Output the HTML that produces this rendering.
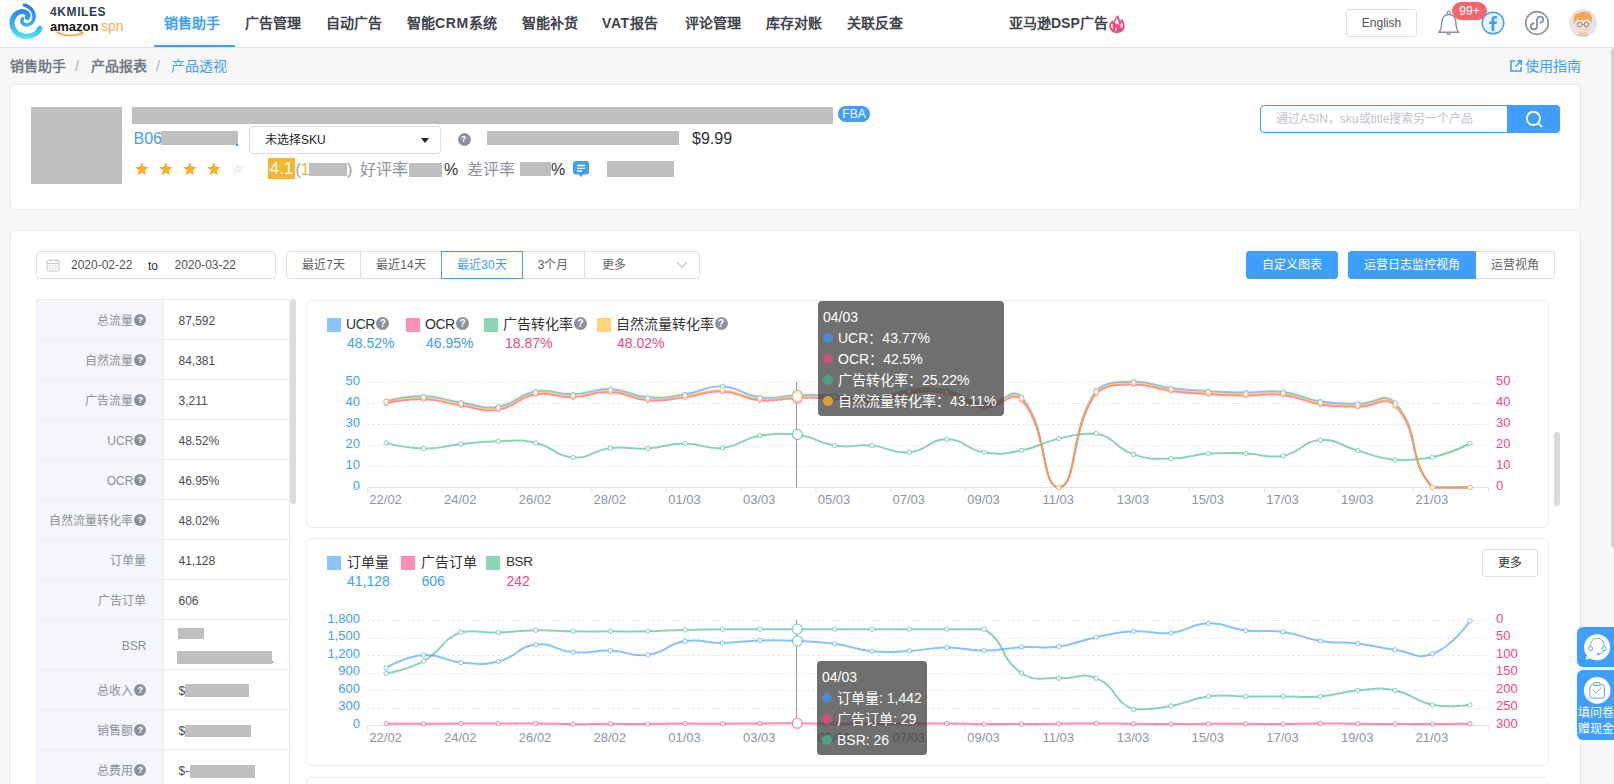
<!DOCTYPE html>
<html lang="zh-CN">
<head>
<meta charset="utf-8">
<title>4KMILES</title>
<style>
*{box-sizing:border-box;margin:0;padding:0}
html,body{width:1614px;height:784px;overflow:hidden;background:#f7f7f8}
body{font-family:"Liberation Sans",sans-serif;font-size:12px;color:#606266;position:relative}
.a{position:absolute;white-space:nowrap}
.c{display:inline-block;width:1em;text-align:center;font-style:normal}
.hdr{left:0;top:0;width:1614px;height:48px;background:#fff;border-bottom:1px solid #dfe3ec}
.nav{top:0;height:47px;line-height:46px;font-size:14px;color:#3f434b;font-weight:500}
.nav .c{font-weight:600}
.nb{font-weight:bold;letter-spacing:0.6px}
.bc{top:56px;height:20px;line-height:20px;font-size:14px;color:#767b86;font-weight:500}
.bcb .c{font-weight:600}
.card{background:#fff;border:1px solid #e3e8f1;border-radius:4px}
.red{background:#bfbfbf}
.btn{height:28px;line-height:27.5px;text-align:center;font-size:12px;border:1px solid #dcdfe6;background:#fff;color:#606266}
.q{display:inline-block;width:12px;height:12px;border-radius:50%;background:#8e919c;vertical-align:-1.5px;margin-left:1px;position:relative}
.q:after{content:"?";position:absolute;left:0;top:0;width:12px;height:12px;line-height:12px;text-align:center;color:#fff;font-size:9px;font-weight:bold;font-style:normal}
.q14{width:13px;height:13px;vertical-align:-1px;margin-left:1px}
.q14:after{width:13px;height:13px;line-height:13px;font-size:10px}
.tr{position:absolute;left:36px;width:254px;border-bottom:1px solid #e8ecf4}
.tl{position:absolute;left:0;top:0;bottom:0;width:128px;background:#f5f6fa;border-left:1px solid #e8ecf4;border-right:1px solid #e8ecf4;text-align:right;padding-right:16.7px;font-size:12px;color:#8c8f98;white-space:nowrap}
.tl .q{margin-right:0}
.tv{position:absolute;left:128px;top:0;bottom:0;width:126px;border-right:1px solid #e8ecf4;padding-left:14.5px;font-size:12px;color:#4a4d55;white-space:nowrap}
.yl{position:absolute;left:300px;width:60px;text-align:right;font-size:13px;line-height:17px;color:#409eff}
.yr{position:absolute;left:1496px;width:60px;text-align:left;font-size:13px;line-height:17px;color:#f5467f}
.xl{position:absolute;width:50px;text-align:center;font-size:13px;line-height:18px;color:#8d93a6}
.lg{position:absolute;font-size:14px;line-height:18px;color:#333;white-space:nowrap}
.lt{letter-spacing:-0.45px}
.sw{position:absolute;width:14px;height:14px}
.lv{position:absolute;font-size:14px;line-height:18px;white-space:nowrap}
.tip{position:absolute;background:rgba(50,50,50,0.7);border-radius:4px;color:#fff;font-size:14px;line-height:21px;padding:5.7px 5px 4.3px 5px;white-space:nowrap}
.tip .d{display:inline-block;width:10px;height:10px;border-radius:50%;margin-right:5px}
</style>
</head>
<body>
<!-- ===== header ===== -->
<div class="a hdr"></div>
<svg class="a" style="left:0;top:0" width="130" height="47" viewBox="0 0 130 47">
  <defs><linearGradient id="lg1" gradientUnits="userSpaceOnUse" x1="0" y1="4" x2="0" y2="38"><stop offset="0" stop-color="#2a78e6"/><stop offset="0.55" stop-color="#36a9f0"/><stop offset="1" stop-color="#4fe6f6"/></linearGradient></defs>
  <path d="M39.8,28.4 C37,35.2 28,38.4 20,35 C12,31.4 9.6,21.4 15,15 C18,11.5 23,10.4 26.4,12.8 C28.4,14.3 28.6,16.4 27.4,17.4" fill="none" stroke="url(#lg1)" stroke-width="5.2" stroke-linecap="round"/>
  <path d="M24.4,5.2 C30.5,6.6 35,12 34,18 C33,23.6 27.4,26.4 23.6,24 C21.6,22.6 21.2,20.2 22.6,18.6" fill="none" stroke="url(#lg1)" stroke-width="3.4" stroke-linecap="round"/>
  <path d="M57.2,32.2 C64,36.6 75,36.4 82.2,32.8" fill="none" stroke="#f79b34" stroke-width="1.5" stroke-linecap="round"/>
  <path d="M79.6,31.6 L82.8,32.2 L81.4,35" fill="none" stroke="#f79b34" stroke-width="1.2" stroke-linecap="round"/>
</svg>
<div class="a" style="left:50px;top:5px;font-size:12px;line-height:14px;font-weight:bold;letter-spacing:0.6px;color:#2f3d52">4KMILES</div>
<div class="a" style="left:50px;top:19px;font-size:13px;line-height:16px;font-weight:bold;color:#111">amazon</div>
<div class="a" style="left:101px;top:18px;font-size:14px;line-height:16px;color:#f9ad55">spn</div>

<div class="a nav" style="left:164px;color:#409eff"><i class="c">销</i><i class="c">售</i><i class="c">助</i><i class="c">手</i></div>
<div class="a" style="left:154px;top:45px;width:81px;height:2px;background:#409eff"></div>
<div class="a nav" style="left:245px"><i class="c">广</i><i class="c">告</i><i class="c">管</i><i class="c">理</i></div>
<div class="a nav" style="left:326px"><i class="c">自</i><i class="c">动</i><i class="c">广</i><i class="c">告</i></div>
<div class="a nav" style="left:407px"><i class="c">智</i><i class="c">能</i><b class="nb">CRM</b><i class="c">系</i><i class="c">统</i></div>
<div class="a nav" style="left:522px"><i class="c">智</i><i class="c">能</i><i class="c">补</i><i class="c">货</i></div>
<div class="a nav" style="left:602px"><b class="nb">VAT</b><i class="c">报</i><i class="c">告</i></div>
<div class="a nav" style="left:685px"><i class="c">评</i><i class="c">论</i><i class="c">管</i><i class="c">理</i></div>
<div class="a nav" style="left:766px"><i class="c">库</i><i class="c">存</i><i class="c">对</i><i class="c">账</i></div>
<div class="a nav" style="left:847px"><i class="c">关</i><i class="c">联</i><i class="c">反</i><i class="c">查</i></div>
<div class="a nav" style="left:1009px"><i class="c">亚</i><i class="c">马</i><i class="c">逊</i><b class="nb" style="letter-spacing:0">DSP</b><i class="c">广</i><i class="c">告</i></div>
<svg class="a" style="left:1108px;top:14px" width="18" height="20" viewBox="0 0 18 20">
  <path d="M10.300,1.200 C10.800,3 11.400,4.800 12,7 C12.800,6.200 13.800,5.400 14.700,4.700 C14.800,6.600 15.600,8 16.300,9.800 C17.400,13 16,16.600 12.800,18.200 C10,19.500 6.400,19.200 4,17.400 C1.200,15.300 0.600,12 1.800,9.400 C2.600,7.800 3.800,7 4.800,6.200 C4.900,7 5.100,7.600 5.500,8.200 C6.200,5.400 7.800,2.800 10.300,1.200 Z" fill="#f8457f"/>
  <path d="M9,4 C7.300,6.200 6.900,8.400 7.700,10.800 C8.400,9.800 9.400,9.600 10.400,10.400 C11.200,11 11.600,11.800 11.600,12.800 C11.200,9.800 10.400,6.800 9,4 Z" fill="#fff"/>
  <path d="M3.300,9.800 C2.300,12 3.200,14.400 5.600,15.400 C4.600,13.600 4.400,11.800 4.900,10 C4.400,10.300 3.800,10.200 3.300,9.800 Z" fill="#fff"/>
  <path d="M13.600,8 C15.400,10.200 15.200,13 13,14.600 C12.200,12.400 12.200,10.200 13.600,8 Z" fill="#fff"/>
  <path d="M8.400,13 C6.800,14.400 6.600,16.400 7.800,17.600 C9,16.600 9.400,14.800 8.400,13 Z" fill="#fff"/>
</svg>

<div class="a btn" style="left:1346px;top:9px;width:71px;border-radius:3px;color:#50535a">English</div>
<!-- bell -->
<svg class="a" style="left:1436px;top:9px" width="26" height="28" viewBox="0 0 26 28">
  <path d="M2.800,23.300 C5.400,21.600 5.500,18 5.700,13.500 C5.900,8.600 8.700,5.500 12.800,5.500 C16.900,5.500 19.700,8.600 19.900,13.500 C20.100,18 20.200,21.600 22.800,23.300 Z" fill="#fff" stroke="#8a93a5" stroke-width="1.500" stroke-linejoin="round"/>
  <circle cx="12.800" cy="3.700" r="1.500" fill="#fff" stroke="#8a93a5" stroke-width="1.200"/>
  <path d="M11,24.300 a1.900,1.700 0 0 0 3.600,0" fill="none" stroke="#8a93a5" stroke-width="1.300"/>
</svg>
<div class="a" style="left:1452px;top:2px;width:35px;height:18px;border-radius:9px;background:#f3666d;color:#fff;font-size:12px;line-height:18px;text-align:center">99+</div>
<!-- fb -->
<svg class="a" style="left:1481px;top:11px" width="24" height="24" viewBox="0 0 24 24">
  <circle cx="12" cy="12" r="10.8" fill="#e8f3ff" stroke="#409eff" stroke-width="1.4"/>
  <path d="M13.2,20 V13 H15.6 L16,10.4 H13.2 V8.8 C13.2,7.9 13.6,7.5 14.5,7.5 H16 V5.3 C15.4,5.2 14.7,5.1 14,5.1 C11.8,5.1 10.5,6.4 10.5,8.6 V10.4 H8.2 V13 H10.5 V20 Z" fill="#409eff"/>
</svg>
<!-- link -->
<svg class="a" style="left:1524px;top:10px" width="26" height="26" viewBox="0 0 26 26">
  <circle cx="13" cy="13" r="11.3" fill="#fff" stroke="#8a93a5" stroke-width="1.7"/>
  <path d="M13,10 C13,7.8 14.6,6.6 16.2,6.6 C18,6.6 19.2,7.9 19.2,9.5 C19.2,11.2 18,12.4 16.4,12.5 M13,10 V16 C13,18.2 11.4,19.4 9.8,19.4 C8,19.4 6.8,18.1 6.8,16.5 C6.8,14.8 8,13.6 9.6,13.5" fill="none" stroke="#8a93a5" stroke-width="1.9" stroke-linecap="round"/>
</svg>
<!-- avatar -->
<svg class="a" style="left:1569px;top:9px" width="28" height="28" viewBox="0 0 28 28">
  <defs><clipPath id="av"><circle cx="14" cy="14" r="14"/></clipPath></defs>
  <circle cx="14" cy="14" r="14" fill="#e5e5e7"/>
  <g clip-path="url(#av)">
    <path d="M10,22 h8 v3 c3,0.6 5,2 6,4 h-20 c1,-2 3,-3.400 6,-4 z" fill="#e9c9b4"/>
    <ellipse cx="14" cy="16" rx="6.6" ry="8" fill="#f3dccb"/>
    <path d="M5.200,15.500 C3,9 6,3.600 11,3.400 C13,1.800 18,2 20.400,4.600 C23.400,6 23.600,11 22,15 C21.600,12.500 20.600,11 19,10 C16,11.400 11,11.400 8.400,10.200 C6.800,11.400 5.800,13 5.200,15.500 Z" fill="#f5a65c"/>
    <circle cx="10.600" cy="15.600" r="2.300" fill="none" stroke="#6f7480" stroke-width="0.8"/>
    <circle cx="17.400" cy="15.600" r="2.300" fill="none" stroke="#6f7480" stroke-width="0.8"/>
    <path d="M12.900,15.400 h2.200" stroke="#6f7480" stroke-width="0.7"/>
  </g>
</svg>
<!-- page scrollbar -->
<div class="a" style="left:1611px;top:48px;width:6px;height:500px;border-radius:3px;background:#d3d3d6"></div>

<!-- ===== breadcrumb ===== -->
<div class="a bc bcb" style="left:10px"><i class="c">销</i><i class="c">售</i><i class="c">助</i><i class="c">手</i></div>
<div class="a bc" style="left:75px;color:#a8abb3;font-weight:normal">/</div>
<div class="a bc bcb" style="left:91px"><i class="c">产</i><i class="c">品</i><i class="c">报</i><i class="c">表</i></div>
<div class="a bc" style="left:156px;color:#a8abb3;font-weight:normal">/</div>
<div class="a bc" style="left:171px;color:#409eff;font-weight:normal"><i class="c">产</i><i class="c">品</i><i class="c">透</i><i class="c">视</i></div>
<svg class="a" style="left:1509px;top:59px" width="14" height="14" viewBox="0 0 14 14"><path d="M6,2 H2 V12 H12 V8" fill="none" stroke="#409eff" stroke-width="1.6"/><path d="M8,1.800 H12.200 V6 M12,2 L6.500,7.500" fill="none" stroke="#409eff" stroke-width="1.6"/></svg>
<div class="a bc" style="left:1524.7px;color:#409eff;font-weight:normal"><i class="c">使</i><i class="c">用</i><i class="c">指</i><i class="c">南</i></div>

<!-- ===== product card ===== -->
<div class="a card" style="left:10px;top:84px;width:1571px;height:126px"></div>
<div class="a red" style="left:31px;top:107px;width:91px;height:77px"></div>
<div class="a red" style="left:132px;top:107px;width:701px;height:17px"></div>
<div class="a" style="left:838px;top:106px;width:32px;height:16px;border-radius:8px;background:#409eff;color:#fff;font-size:12px;line-height:16px;text-align:center">FBA</div>
<div class="a" style="left:133.500px;top:129px;font-size:16px;line-height:20px;color:#409eff">B06</div>
<div class="a red" style="left:161px;top:131px;width:77px;height:14px"></div>
<div class="a" style="left:236px;top:144px;width:2px;height:2px;background:#409eff"></div>
<div class="a" style="left:249px;top:126px;width:192px;height:28px;border:1px solid #dcdfe6;border-radius:4px;background:#fff;font-size:12px;line-height:26px;padding-left:15px;color:#222"><i class="c">未</i><i class="c">选</i><i class="c">择</i>SKU</div>
<div class="a" style="left:421px;top:138px;width:0;height:0;border-left:4px solid transparent;border-right:4px solid transparent;border-top:5px solid #222"></div>
<i class="q a" style="left:457.500px;top:132.500px;width:13px;height:13px;margin:0"></i>
<div class="a red" style="left:487px;top:131px;width:192px;height:14px"></div>
<div class="a" style="left:692px;top:129px;font-size:16px;line-height:20px;color:#303133">$9.99</div>
<svg class="a" style="left:132px;top:160px" width="120" height="18" viewBox="0 0 120 18">
  <defs><path id="st" d="M0,-7 L2.060,-2.160 L7.300,-1.720 L3.320,1.720 L4.520,6.840 L0,4.120 L-4.520,6.840 L-3.320,1.720 L-7.300,-1.720 L-2.060,-2.160 Z"/></defs>
  <use href="#st" transform="translate(9.8 8.8) scale(0.93)" fill="#f7b02c"/><use href="#st" transform="translate(33.800 8.8) scale(0.93)" fill="#f7b02c"/><use href="#st" transform="translate(57.800 8.8) scale(0.93)" fill="#f7b02c"/><use href="#st" transform="translate(81.800 8.8) scale(0.93)" fill="#f7b02c"/><use href="#st" transform="translate(105.8 8.8) scale(0.93)" fill="#eef1f7"/>
</svg>
<div class="a" style="left:268px;top:158px;width:27px;height:21px;background:#f8b62c;color:#fff;font-size:17px;line-height:21px;text-align:center">4.1</div>
<div class="a" style="left:295.500px;top:160px;font-size:16px;line-height:20px;color:#9a9da5">(<span style="color:#f8b62c">1</span></div>
<div class="a red" style="left:309px;top:163px;width:38px;height:12.500px"></div>
<div class="a" style="left:347px;top:160px;font-size:16px;line-height:20px;color:#9a9da5">)</div>
<div class="a" style="left:360px;top:160px;font-size:16px;line-height:20px;color:#8f929b"><i class="c">好</i><i class="c">评</i><i class="c">率</i></div>
<div class="a red" style="left:409px;top:162.500px;width:33px;height:14px"></div>
<div class="a" style="left:444px;top:160px;font-size:16px;line-height:20px;color:#303133">%</div>
<div class="a" style="left:466.500px;top:160px;font-size:16px;line-height:20px;color:#8f929b"><i class="c">差</i><i class="c">评</i><i class="c">率</i></div>
<div class="a red" style="left:520px;top:162px;width:31px;height:13.500px"></div>
<div class="a" style="left:551px;top:160px;font-size:16px;line-height:20px;color:#303133">%</div>
<svg class="a" style="left:573px;top:161px" width="16" height="17" viewBox="0 0 16 17"><path d="M3,0 H13 a3,3 0 0 1 3,3 V10.500 a3,3 0 0 1 -3,3 H10 L8,16.200 L6,13.500 H3 a3,3 0 0 1 -3,-3 V3 a3,3 0 0 1 3,-3 Z" fill="#409eff"/><path d="M4,4.500 H12 M4,7.300 H12 M4,10 H9" stroke="#fff" stroke-width="1.300"/></svg>
<div class="a red" style="left:607px;top:161px;width:67px;height:15.500px"></div>
<!-- search -->
<div class="a" style="left:1260px;top:105px;width:248px;height:28px;border:1px solid #409eff;border-radius:4px 0 0 4px;background:#fff;font-size:12px;line-height:26px;padding-left:15px;color:#c0c4cc"><i class="c">通</i><i class="c">过</i>ASIN<i class="c">，</i>sku<i class="c">或</i>title<i class="c">搜</i><i class="c">索</i><i class="c">另</i><i class="c">一</i><i class="c">个</i><i class="c">产</i><i class="c">品</i></div>
<div class="a" style="left:1507px;top:105px;width:53px;height:28px;border-radius:0 4px 4px 0;background:#409eff"></div>
<svg class="a" style="left:1524px;top:109px" width="20" height="20" viewBox="0 0 20 20"><circle cx="9.400" cy="9.400" r="6.600" fill="none" stroke="#fff" stroke-width="1.900"/><path d="M14.200,14.400 L17.400,17.400" stroke="#fff" stroke-width="1.900" stroke-linecap="round"/></svg>

<!-- ===== main card ===== -->
<div class="a card" style="left:10px;top:230px;width:1571px;height:600px"></div>
<div class="a" style="left:36px;top:251px;width:240px;height:28px;border:1px solid #dcdfe6;border-radius:4px;background:#fff"></div>
<svg class="a" style="left:46px;top:258px" width="14" height="14" viewBox="0 0 14 14"><rect x="1" y="2.3" width="12" height="10.700" rx="0.800" fill="none" stroke="#c0c4cc" stroke-width="1"/><path d="M1,5.300 H13 M4,0.800 V3 M10,0.800 V3" stroke="#c0c4cc" stroke-width="1"/><path d="M3.400,7.800 H11 M3.400,10.300 H11" stroke="#c0c4cc" stroke-width="1.100" stroke-dasharray="1.800 1"/></svg>
<div class="a" style="left:71px;top:256px;font-size:12px;line-height:18px;color:#50535a">2020-02-22</div>
<div class="a" style="left:148px;top:257px;font-size:12px;line-height:18px;color:#303133">to</div>
<div class="a" style="left:174.500px;top:256px;font-size:12px;line-height:18px;color:#50535a">2020-03-22</div>

<div class="a btn" style="left:286px;top:251px;width:75px;border-radius:4px 0 0 4px"><i class="c">最</i><i class="c">近</i>7<i class="c">天</i></div>
<div class="a btn" style="left:360px;top:251px;width:82px"><i class="c">最</i><i class="c">近</i>14<i class="c">天</i></div>
<div class="a btn" style="left:522px;top:251px;width:63px;border-left:0">3<i class="c">个</i><i class="c">月</i></div>
<div class="a btn" style="left:584px;top:251px;width:116px;border-radius:0 4px 4px 0;text-align:left;padding-left:17px"><i class="c">更</i><i class="c">多</i></div>
<div class="a btn" style="left:441px;top:251px;width:82px;border-color:#409eff;color:#409eff"><i class="c">最</i><i class="c">近</i>30<i class="c">天</i></div>
<svg class="a" style="left:676px;top:261px" width="12" height="8" viewBox="0 0 12 8"><path d="M1,1.200 L6,6.200 L11,1.200" fill="none" stroke="#c0c4cc" stroke-width="1.100"/></svg>

<div class="a btn" style="left:1246px;top:251px;width:92px;border-radius:3px;background:#409eff;border-color:#409eff;color:#fff"><i class="c">自</i><i class="c">定</i><i class="c">义</i><i class="c">图</i><i class="c">表</i></div>
<div class="a btn" style="left:1348px;top:251px;width:128px;border-radius:3px 0 0 3px;background:#409eff;border-color:#409eff;color:#fff"><i class="c">运</i><i class="c">营</i><i class="c">日</i><i class="c">志</i><i class="c">监</i><i class="c">控</i><i class="c">视</i><i class="c">角</i></div>
<div class="a btn" style="left:1476px;top:251px;width:79px;border-radius:0 3px 3px 0;border-left:0"><i class="c">运</i><i class="c">营</i><i class="c">视</i><i class="c">角</i></div>

<!-- table -->
<div class="a" style="left:36px;top:299px;width:254px;height:1px;background:#e8ecf4"></div>
<div class="tr" style="top:299.5px;height:40px"><div class="tl" style="line-height:42px"><i class="c">总</i><i class="c">流</i><i class="c">量</i><i class="q"></i></div><div class="tv" style="line-height:42px">87,592</div></div><div class="tr" style="top:339.5px;height:40px"><div class="tl" style="line-height:42px"><i class="c">自</i><i class="c">然</i><i class="c">流</i><i class="c">量</i><i class="q"></i></div><div class="tv" style="line-height:42px">84,381</div></div><div class="tr" style="top:379.5px;height:40px"><div class="tl" style="line-height:42px"><i class="c">广</i><i class="c">告</i><i class="c">流</i><i class="c">量</i><i class="q"></i></div><div class="tv" style="line-height:42px">3,211</div></div><div class="tr" style="top:419.5px;height:40px"><div class="tl" style="line-height:42px">UCR<i class="q"></i></div><div class="tv" style="line-height:42px">48.52%</div></div><div class="tr" style="top:459.5px;height:40px"><div class="tl" style="line-height:42px">OCR<i class="q"></i></div><div class="tv" style="line-height:42px">46.95%</div></div><div class="tr" style="top:499.5px;height:40px"><div class="tl" style="line-height:42px"><i class="c">自</i><i class="c">然</i><i class="c">流</i><i class="c">量</i><i class="c">转</i><i class="c">化</i><i class="c">率</i><i class="q"></i></div><div class="tv" style="line-height:42px">48.02%</div></div><div class="tr" style="top:539.5px;height:40px"><div class="tl" style="line-height:42px"><i class="c">订</i><i class="c">单</i><i class="c">量</i></div><div class="tv" style="line-height:42px">41,128</div></div><div class="tr" style="top:579.5px;height:40px"><div class="tl" style="line-height:42px"><i class="c">广</i><i class="c">告</i><i class="c">订</i><i class="c">单</i></div><div class="tv" style="line-height:42px">606</div></div><div class="tr" style="top:619.5px;height:50px"><div class="tl" style="line-height:52px">BSR</div><div class="tv" style="line-height:52px"></div></div><div class="tr" style="top:669.5px;height:40px"><div class="tl" style="line-height:42px"><i class="c">总</i><i class="c">收</i><i class="c">入</i><i class="q"></i></div><div class="tv" style="line-height:42px">$</div></div><div class="tr" style="top:709.5px;height:40px"><div class="tl" style="line-height:42px"><i class="c">销</i><i class="c">售</i><i class="c">额</i><i class="q"></i></div><div class="tv" style="line-height:42px">$</div></div><div class="tr" style="top:749.5px;height:40px"><div class="tl" style="line-height:42px"><i class="c">总</i><i class="c">费</i><i class="c">用</i><i class="q"></i></div><div class="tv" style="line-height:42px">$-</div></div>
<div class="a red" style="left:178px;top:628px;width:26px;height:10.500px"></div>
<div class="a red" style="left:177px;top:650.500px;width:95px;height:13.500px"></div>
<div class="a" style="left:272px;top:661px;width:1px;height:2px;background:#409eff"></div>
<div class="a red" style="left:185px;top:684px;width:64px;height:12.500px"></div>
<div class="a red" style="left:185px;top:724.500px;width:66px;height:12.500px"></div>
<div class="a red" style="left:190px;top:765px;width:65px;height:12.500px"></div>
<div class="a" style="left:290px;top:299px;width:6px;height:204.5px;border-radius:3px;background:#dcdcdf"></div>

<!-- chart cards -->
<div class="a" style="left:306px;top:300px;width:1243px;height:228px;border:1px solid #e6ebf5;border-radius:6px;background:#fff"></div>
<div class="a" style="left:306px;top:538px;width:1243px;height:228px;border:1px solid #e6ebf5;border-radius:6px;background:#fff"></div>
<div class="a" style="left:306px;top:776.500px;width:1243px;height:40px;border:1px solid #e6ebf5;border-radius:6px;background:#fff"></div>
<div class="a" style="left:1554px;top:432px;width:6px;height:74px;border-radius:3px;background:#d9d9db"></div>

<!-- legends chart 1 -->
<div class="sw" style="left:327px;top:317.500px;background:#8cc4ff"></div><div class="lg lt" style="left:346px;top:315px">UCR<i class="q q14"></i></div>
<div class="sw" style="left:406px;top:317.500px;background:#fb8fb2"></div><div class="lg lt" style="left:425px;top:315px">OCR<i class="q q14"></i></div>
<div class="sw" style="left:484px;top:317.500px;background:#8ed5b5"></div><div class="lg" style="left:503px;top:315px"><i class="c">广</i><i class="c">告</i><i class="c">转</i><i class="c">化</i><i class="c">率</i><i class="q q14"></i></div>
<div class="sw" style="left:596.700px;top:317.500px;background:#fdd580"></div><div class="lg" style="left:615.500px;top:315px"><i class="c">自</i><i class="c">然</i><i class="c">流</i><i class="c">量</i><i class="c">转</i><i class="c">化</i><i class="c">率</i><i class="q q14"></i></div>
<div class="lv" style="left:347px;top:333.500px;color:#409eff">48.52%</div>
<div class="lv" style="left:426px;top:333.500px;color:#409eff">46.95%</div>
<div class="lv" style="left:505px;top:333.500px;color:#f5467f">18.87%</div>
<div class="lv" style="left:617px;top:333.500px;color:#f5467f">48.02%</div>
<!-- legends chart 2 -->
<div class="sw" style="left:327px;top:555.500px;background:#8cc4ff"></div><div class="lg" style="left:346.500px;top:553px"><i class="c">订</i><i class="c">单</i><i class="c">量</i></div>
<div class="sw" style="left:401px;top:555.500px;background:#fb8fb2"></div><div class="lg" style="left:420.500px;top:553px"><i class="c">广</i><i class="c">告</i><i class="c">订</i><i class="c">单</i></div>
<div class="sw" style="left:486px;top:555.500px;background:#8ed5b5"></div><div class="lg lt" style="left:506px;top:553px;font-size:13.6px">BSR</div>
<div class="lv" style="left:347px;top:572px;color:#409eff">41,128</div>
<div class="lv" style="left:421.500px;top:572px;color:#409eff">606</div>
<div class="lv" style="left:506.500px;top:572px;color:#f5467f">242</div>
<div class="a btn" style="left:1482px;top:549px;width:56px;height:28px;border-radius:3px;color:#303133"><i class="c">更</i><i class="c">多</i></div>

<div class="yl" style="top:477.2px">0</div><div class="yr" style="top:477.2px">0</div><div class="yl" style="top:456.1px">10</div><div class="yr" style="top:456.1px">10</div><div class="yl" style="top:435.1px">20</div><div class="yr" style="top:435.1px">20</div><div class="yl" style="top:414.0px">30</div><div class="yr" style="top:414.0px">30</div><div class="yl" style="top:393.0px">40</div><div class="yr" style="top:393.0px">40</div><div class="yl" style="top:371.9px">50</div><div class="yr" style="top:371.9px">50</div><div class="yl" style="top:714.7px">0</div><div class="yl" style="top:697.2px">300</div><div class="yl" style="top:679.7px">600</div><div class="yl" style="top:662.2px">900</div><div class="yl" style="top:644.8px">1,200</div><div class="yl" style="top:627.3px">1,500</div><div class="yl" style="top:609.8px">1,800</div><div class="yr" style="top:609.8px">0</div><div class="yr" style="top:627.3px">50</div><div class="yr" style="top:644.8px">100</div><div class="yr" style="top:662.3px">150</div><div class="yr" style="top:679.8px">200</div><div class="yr" style="top:697.3px">250</div><div class="yr" style="top:714.8px">300</div><div class="xl" style="left:360.6px;top:491px">22/02</div><div class="xl" style="left:360.6px;top:729px">22/02</div><div class="xl" style="left:435.3px;top:491px">24/02</div><div class="xl" style="left:435.3px;top:729px">24/02</div><div class="xl" style="left:510.1px;top:491px">26/02</div><div class="xl" style="left:510.1px;top:729px">26/02</div><div class="xl" style="left:584.8px;top:491px">28/02</div><div class="xl" style="left:584.8px;top:729px">28/02</div><div class="xl" style="left:659.5px;top:491px">01/03</div><div class="xl" style="left:659.5px;top:729px">01/03</div><div class="xl" style="left:734.3px;top:491px">03/03</div><div class="xl" style="left:734.3px;top:729px">03/03</div><div class="xl" style="left:809.0px;top:491px">05/03</div><div class="xl" style="left:809.0px;top:729px">05/03</div><div class="xl" style="left:883.8px;top:491px">07/03</div><div class="xl" style="left:883.8px;top:729px">07/03</div><div class="xl" style="left:958.5px;top:491px">09/03</div><div class="xl" style="left:958.5px;top:729px">09/03</div><div class="xl" style="left:1033.2px;top:491px">11/03</div><div class="xl" style="left:1033.2px;top:729px">11/03</div><div class="xl" style="left:1108.0px;top:491px">13/03</div><div class="xl" style="left:1108.0px;top:729px">13/03</div><div class="xl" style="left:1182.7px;top:491px">15/03</div><div class="xl" style="left:1182.7px;top:729px">15/03</div><div class="xl" style="left:1257.5px;top:491px">17/03</div><div class="xl" style="left:1257.5px;top:729px">17/03</div><div class="xl" style="left:1332.2px;top:491px">19/03</div><div class="xl" style="left:1332.2px;top:729px">19/03</div><div class="xl" style="left:1406.9px;top:491px">21/03</div><div class="xl" style="left:1406.9px;top:729px">21/03</div>
<svg class="a" style="left:0;top:0;pointer-events:none" width="1614" height="784" viewBox="0 0 1614 784">
<line x1="367.5" x2="1488.5" y1="466.5" y2="466.5" stroke="#e0e6f1" stroke-width="1" stroke-dasharray="2,3"/><line x1="367.5" x2="1488.5" y1="445.5" y2="445.5" stroke="#e0e6f1" stroke-width="1" stroke-dasharray="2,3"/><line x1="367.5" x2="1488.5" y1="424.5" y2="424.5" stroke="#e0e6f1" stroke-width="1" stroke-dasharray="2,3"/><line x1="367.5" x2="1488.5" y1="403.5" y2="403.5" stroke="#e0e6f1" stroke-width="1" stroke-dasharray="2,3"/><line x1="367.5" x2="1488.5" y1="382.5" y2="382.5" stroke="#e0e6f1" stroke-width="1" stroke-dasharray="2,3"/><line x1="367.5" x2="1488.5" y1="487.5" y2="487.5" stroke="#dfe4ee" stroke-width="1"/><line x1="367.5" x2="367.5" y1="487.5" y2="492.5" stroke="#dfe4ee" stroke-width="1"/><line x1="442.2" x2="442.2" y1="487.5" y2="492.5" stroke="#dfe4ee" stroke-width="1"/><line x1="517.0" x2="517.0" y1="487.5" y2="492.5" stroke="#dfe4ee" stroke-width="1"/><line x1="591.7" x2="591.7" y1="487.5" y2="492.5" stroke="#dfe4ee" stroke-width="1"/><line x1="666.5" x2="666.5" y1="487.5" y2="492.5" stroke="#dfe4ee" stroke-width="1"/><line x1="741.2" x2="741.2" y1="487.5" y2="492.5" stroke="#dfe4ee" stroke-width="1"/><line x1="815.9" x2="815.9" y1="487.5" y2="492.5" stroke="#dfe4ee" stroke-width="1"/><line x1="890.7" x2="890.7" y1="487.5" y2="492.5" stroke="#dfe4ee" stroke-width="1"/><line x1="965.4" x2="965.4" y1="487.5" y2="492.5" stroke="#dfe4ee" stroke-width="1"/><line x1="1040.2" x2="1040.2" y1="487.5" y2="492.5" stroke="#dfe4ee" stroke-width="1"/><line x1="1114.9" x2="1114.9" y1="487.5" y2="492.5" stroke="#dfe4ee" stroke-width="1"/><line x1="1189.6" x2="1189.6" y1="487.5" y2="492.5" stroke="#dfe4ee" stroke-width="1"/><line x1="1264.4" x2="1264.4" y1="487.5" y2="492.5" stroke="#dfe4ee" stroke-width="1"/><line x1="1339.1" x2="1339.1" y1="487.5" y2="492.5" stroke="#dfe4ee" stroke-width="1"/><line x1="1413.9" x2="1413.9" y1="487.5" y2="492.5" stroke="#dfe4ee" stroke-width="1"/><line x1="1488.6" x2="1488.6" y1="487.5" y2="492.5" stroke="#dfe4ee" stroke-width="1"/><line x1="796.5" x2="796.5" y1="382" y2="487.5" stroke="#999" stroke-width="1"/><path d="M386.2,401.2C386.2,401.2 404.9,395.9 423.6,396.2C442.3,396.5 442.2,399.9 460.9,402.5C479.5,405.1 480.3,409.4 498.3,406.7C517.7,403.8 516.3,394.6 535.7,391.4C553.6,388.4 554.4,394.9 573.0,394.3C591.8,393.7 591.8,388.3 610.4,389.0C629.2,389.8 628.9,395.9 647.8,397.3C666.3,398.6 666.6,397.0 685.1,394.3C704.0,391.6 704.0,385.7 722.5,386.4C741.4,387.2 740.8,395.0 759.9,397.3C778.2,399.4 778.6,395.8 797.3,395.3C815.9,394.8 816.0,394.5 834.6,395.4C853.4,396.3 853.5,400.2 872.0,398.9C890.9,397.6 890.4,392.2 909.4,390.1C927.8,388.0 928.6,387.1 946.7,390.5C966.0,394.2 965.0,402.5 984.1,404.2C1002.4,405.8 1011.0,385.4 1021.5,397.0C1048.4,427.0 1040.7,487.5 1058.8,487.5C1078.1,485.8 1068.9,429.2 1096.2,390.5C1106.3,381.5 1114.8,382.1 1133.6,381.5C1152.1,381.5 1152.2,385.6 1171.0,388.0C1189.5,390.4 1189.6,390.0 1208.3,391.2C1227.0,392.3 1227.0,392.4 1245.7,392.6C1264.4,392.8 1264.7,389.8 1283.1,392.0C1302.0,394.2 1301.5,398.5 1320.4,401.5C1338.8,404.4 1339.1,403.4 1357.8,403.8C1376.5,404.2 1384.4,390.9 1395.2,402.9C1421.8,432.7 1405.9,457.4 1432.5,487.5C1443.3,487.5 1469.9,487.5 1469.9,487.5" fill="none" stroke="#409eff" stroke-opacity="0.62" stroke-width="2" stroke-linejoin="round"/><circle cx="386.2" cy="401.2" r="2.2" fill="#fff" stroke="#409eff" stroke-opacity="0.62" stroke-width="1"/><circle cx="423.6" cy="396.2" r="2.2" fill="#fff" stroke="#409eff" stroke-opacity="0.62" stroke-width="1"/><circle cx="460.9" cy="402.5" r="2.2" fill="#fff" stroke="#409eff" stroke-opacity="0.62" stroke-width="1"/><circle cx="498.3" cy="406.7" r="2.2" fill="#fff" stroke="#409eff" stroke-opacity="0.62" stroke-width="1"/><circle cx="535.7" cy="391.4" r="2.2" fill="#fff" stroke="#409eff" stroke-opacity="0.62" stroke-width="1"/><circle cx="573.0" cy="394.3" r="2.2" fill="#fff" stroke="#409eff" stroke-opacity="0.62" stroke-width="1"/><circle cx="610.4" cy="389.0" r="2.2" fill="#fff" stroke="#409eff" stroke-opacity="0.62" stroke-width="1"/><circle cx="647.8" cy="397.3" r="2.2" fill="#fff" stroke="#409eff" stroke-opacity="0.62" stroke-width="1"/><circle cx="685.1" cy="394.3" r="2.2" fill="#fff" stroke="#409eff" stroke-opacity="0.62" stroke-width="1"/><circle cx="722.5" cy="386.4" r="2.2" fill="#fff" stroke="#409eff" stroke-opacity="0.62" stroke-width="1"/><circle cx="759.9" cy="397.3" r="2.2" fill="#fff" stroke="#409eff" stroke-opacity="0.62" stroke-width="1"/><circle cx="834.6" cy="395.4" r="2.2" fill="#fff" stroke="#409eff" stroke-opacity="0.62" stroke-width="1"/><circle cx="872.0" cy="398.9" r="2.2" fill="#fff" stroke="#409eff" stroke-opacity="0.62" stroke-width="1"/><circle cx="909.4" cy="390.1" r="2.2" fill="#fff" stroke="#409eff" stroke-opacity="0.62" stroke-width="1"/><circle cx="946.7" cy="390.5" r="2.2" fill="#fff" stroke="#409eff" stroke-opacity="0.62" stroke-width="1"/><circle cx="984.1" cy="404.2" r="2.2" fill="#fff" stroke="#409eff" stroke-opacity="0.62" stroke-width="1"/><circle cx="1021.5" cy="397.0" r="2.2" fill="#fff" stroke="#409eff" stroke-opacity="0.62" stroke-width="1"/><circle cx="1058.8" cy="487.5" r="2.2" fill="#fff" stroke="#409eff" stroke-opacity="0.62" stroke-width="1"/><circle cx="1096.2" cy="390.5" r="2.2" fill="#fff" stroke="#409eff" stroke-opacity="0.62" stroke-width="1"/><circle cx="1133.6" cy="381.5" r="2.2" fill="#fff" stroke="#409eff" stroke-opacity="0.62" stroke-width="1"/><circle cx="1171.0" cy="388.0" r="2.2" fill="#fff" stroke="#409eff" stroke-opacity="0.62" stroke-width="1"/><circle cx="1208.3" cy="391.2" r="2.2" fill="#fff" stroke="#409eff" stroke-opacity="0.62" stroke-width="1"/><circle cx="1245.7" cy="392.6" r="2.2" fill="#fff" stroke="#409eff" stroke-opacity="0.62" stroke-width="1"/><circle cx="1283.1" cy="392.0" r="2.2" fill="#fff" stroke="#409eff" stroke-opacity="0.62" stroke-width="1"/><circle cx="1320.4" cy="401.5" r="2.2" fill="#fff" stroke="#409eff" stroke-opacity="0.62" stroke-width="1"/><circle cx="1357.8" cy="403.8" r="2.2" fill="#fff" stroke="#409eff" stroke-opacity="0.62" stroke-width="1"/><circle cx="1395.2" cy="402.9" r="2.2" fill="#fff" stroke="#409eff" stroke-opacity="0.62" stroke-width="1"/><circle cx="1432.5" cy="487.5" r="2.2" fill="#fff" stroke="#409eff" stroke-opacity="0.62" stroke-width="1"/><circle cx="1469.9" cy="487.5" r="2.2" fill="#fff" stroke="#409eff" stroke-opacity="0.62" stroke-width="1"/><path d="M386.2,403.3C386.2,403.3 404.9,398.6 423.6,399.2C442.3,399.7 442.2,402.8 460.9,405.5C479.5,408.1 480.3,412.4 498.3,409.7C517.7,406.8 516.3,397.5 535.7,394.3C553.6,391.3 554.4,397.8 573.0,397.3C591.8,396.7 591.8,391.3 610.4,392.0C629.2,392.7 628.9,398.9 647.8,400.2C666.3,401.5 666.5,399.4 685.1,397.3C703.9,395.1 704.0,390.8 722.5,391.6C741.3,392.3 741.0,398.6 759.9,400.2C778.3,401.8 778.6,398.5 797.3,398.0C815.9,397.5 816.0,397.3 834.6,398.3C853.4,399.3 853.5,403.2 872.0,401.9C890.9,400.6 890.4,395.2 909.4,393.0C927.8,391.0 928.6,390.1 946.7,393.5C966.0,397.1 965.0,405.5 984.1,407.2C1002.4,408.8 1010.8,388.5 1021.5,400.0C1048.2,428.7 1040.7,487.5 1058.8,487.5C1078.1,485.8 1069.1,430.8 1096.2,393.5C1106.5,384.4 1114.8,385.0 1133.6,384.4C1152.1,384.4 1152.2,388.5 1171.0,390.9C1189.5,393.3 1189.6,392.9 1208.3,394.1C1227.0,395.3 1227.0,395.4 1245.7,395.6C1264.4,395.8 1264.7,392.8 1283.1,394.9C1302.0,397.2 1301.5,401.4 1320.4,404.4C1338.8,407.3 1339.1,406.4 1357.8,406.7C1376.5,407.1 1384.2,394.0 1395.2,405.9C1421.6,434.4 1406.2,458.7 1432.5,487.5C1443.5,487.5 1469.9,487.5 1469.9,487.5" fill="none" stroke="#f8457f" stroke-opacity="0.62" stroke-width="2" stroke-linejoin="round"/><circle cx="386.2" cy="403.3" r="2.2" fill="#fff" stroke="#f8457f" stroke-opacity="0.62" stroke-width="1"/><circle cx="423.6" cy="399.2" r="2.2" fill="#fff" stroke="#f8457f" stroke-opacity="0.62" stroke-width="1"/><circle cx="460.9" cy="405.5" r="2.2" fill="#fff" stroke="#f8457f" stroke-opacity="0.62" stroke-width="1"/><circle cx="498.3" cy="409.7" r="2.2" fill="#fff" stroke="#f8457f" stroke-opacity="0.62" stroke-width="1"/><circle cx="535.7" cy="394.3" r="2.2" fill="#fff" stroke="#f8457f" stroke-opacity="0.62" stroke-width="1"/><circle cx="573.0" cy="397.3" r="2.2" fill="#fff" stroke="#f8457f" stroke-opacity="0.62" stroke-width="1"/><circle cx="610.4" cy="392.0" r="2.2" fill="#fff" stroke="#f8457f" stroke-opacity="0.62" stroke-width="1"/><circle cx="647.8" cy="400.2" r="2.2" fill="#fff" stroke="#f8457f" stroke-opacity="0.62" stroke-width="1"/><circle cx="685.1" cy="397.3" r="2.2" fill="#fff" stroke="#f8457f" stroke-opacity="0.62" stroke-width="1"/><circle cx="722.5" cy="391.6" r="2.2" fill="#fff" stroke="#f8457f" stroke-opacity="0.62" stroke-width="1"/><circle cx="759.9" cy="400.2" r="2.2" fill="#fff" stroke="#f8457f" stroke-opacity="0.62" stroke-width="1"/><circle cx="834.6" cy="398.3" r="2.2" fill="#fff" stroke="#f8457f" stroke-opacity="0.62" stroke-width="1"/><circle cx="872.0" cy="401.9" r="2.2" fill="#fff" stroke="#f8457f" stroke-opacity="0.62" stroke-width="1"/><circle cx="909.4" cy="393.0" r="2.2" fill="#fff" stroke="#f8457f" stroke-opacity="0.62" stroke-width="1"/><circle cx="946.7" cy="393.5" r="2.2" fill="#fff" stroke="#f8457f" stroke-opacity="0.62" stroke-width="1"/><circle cx="984.1" cy="407.2" r="2.2" fill="#fff" stroke="#f8457f" stroke-opacity="0.62" stroke-width="1"/><circle cx="1021.5" cy="400.0" r="2.2" fill="#fff" stroke="#f8457f" stroke-opacity="0.62" stroke-width="1"/><circle cx="1058.8" cy="487.5" r="2.2" fill="#fff" stroke="#f8457f" stroke-opacity="0.62" stroke-width="1"/><circle cx="1096.2" cy="393.5" r="2.2" fill="#fff" stroke="#f8457f" stroke-opacity="0.62" stroke-width="1"/><circle cx="1133.6" cy="384.4" r="2.2" fill="#fff" stroke="#f8457f" stroke-opacity="0.62" stroke-width="1"/><circle cx="1171.0" cy="390.9" r="2.2" fill="#fff" stroke="#f8457f" stroke-opacity="0.62" stroke-width="1"/><circle cx="1208.3" cy="394.1" r="2.2" fill="#fff" stroke="#f8457f" stroke-opacity="0.62" stroke-width="1"/><circle cx="1245.7" cy="395.6" r="2.2" fill="#fff" stroke="#f8457f" stroke-opacity="0.62" stroke-width="1"/><circle cx="1283.1" cy="394.9" r="2.2" fill="#fff" stroke="#f8457f" stroke-opacity="0.62" stroke-width="1"/><circle cx="1320.4" cy="404.4" r="2.2" fill="#fff" stroke="#f8457f" stroke-opacity="0.62" stroke-width="1"/><circle cx="1357.8" cy="406.7" r="2.2" fill="#fff" stroke="#f8457f" stroke-opacity="0.62" stroke-width="1"/><circle cx="1395.2" cy="405.9" r="2.2" fill="#fff" stroke="#f8457f" stroke-opacity="0.62" stroke-width="1"/><circle cx="1432.5" cy="487.5" r="2.2" fill="#fff" stroke="#f8457f" stroke-opacity="0.62" stroke-width="1"/><circle cx="1469.9" cy="487.5" r="2.2" fill="#fff" stroke="#f8457f" stroke-opacity="0.62" stroke-width="1"/><path d="M386.2,442.9C386.2,442.9 404.8,448.2 423.6,448.5C442.2,448.9 442.2,446.0 460.9,444.1C479.6,442.3 479.6,441.5 498.3,441.2C517.0,440.9 517.6,438.9 535.7,442.9C555.0,447.0 554.0,456.0 573.0,457.4C591.3,458.7 591.4,450.4 610.4,448.1C628.8,445.9 629.2,449.7 647.8,448.5C666.5,447.4 666.4,443.6 685.1,443.5C703.8,443.3 704.3,449.9 722.5,447.9C741.6,445.9 740.7,438.9 759.9,435.5C778.1,433.4 779.0,433.4 797.3,434.4C816.3,437.0 815.5,442.7 834.6,445.6C852.9,448.3 853.5,443.9 872.0,445.6C890.8,447.3 891.1,453.9 909.4,452.3C928.4,450.7 928.1,439.3 946.7,439.3C965.4,439.3 964.9,449.5 984.1,452.3C1002.3,455.0 1003.2,453.8 1021.5,450.4C1040.6,446.9 1039.8,443.0 1058.8,438.6C1077.2,434.5 1078.7,433.4 1096.2,433.4C1116.1,437.6 1113.7,447.7 1133.6,454.4C1151.0,459.9 1152.3,458.9 1171.0,458.6C1189.7,458.4 1189.6,454.9 1208.3,453.6C1226.9,452.3 1227.0,452.9 1245.7,453.4C1264.4,453.9 1265.1,458.9 1283.1,455.7C1302.5,452.3 1301.4,441.4 1320.4,440.1C1338.7,438.9 1339.0,445.7 1357.8,450.6C1376.4,455.6 1376.2,458.3 1395.2,459.9C1413.6,459.9 1414.4,459.9 1432.5,457.2C1451.8,452.9 1469.9,443.5 1469.9,443.5" fill="none" stroke="#42b983" stroke-opacity="0.62" stroke-width="2" stroke-linejoin="round"/><circle cx="386.2" cy="442.9" r="2.2" fill="#fff" stroke="#42b983" stroke-opacity="0.62" stroke-width="1"/><circle cx="423.6" cy="448.5" r="2.2" fill="#fff" stroke="#42b983" stroke-opacity="0.62" stroke-width="1"/><circle cx="460.9" cy="444.1" r="2.2" fill="#fff" stroke="#42b983" stroke-opacity="0.62" stroke-width="1"/><circle cx="498.3" cy="441.2" r="2.2" fill="#fff" stroke="#42b983" stroke-opacity="0.62" stroke-width="1"/><circle cx="535.7" cy="442.9" r="2.2" fill="#fff" stroke="#42b983" stroke-opacity="0.62" stroke-width="1"/><circle cx="573.0" cy="457.4" r="2.2" fill="#fff" stroke="#42b983" stroke-opacity="0.62" stroke-width="1"/><circle cx="610.4" cy="448.1" r="2.2" fill="#fff" stroke="#42b983" stroke-opacity="0.62" stroke-width="1"/><circle cx="647.8" cy="448.5" r="2.2" fill="#fff" stroke="#42b983" stroke-opacity="0.62" stroke-width="1"/><circle cx="685.1" cy="443.5" r="2.2" fill="#fff" stroke="#42b983" stroke-opacity="0.62" stroke-width="1"/><circle cx="722.5" cy="447.9" r="2.2" fill="#fff" stroke="#42b983" stroke-opacity="0.62" stroke-width="1"/><circle cx="759.9" cy="435.5" r="2.2" fill="#fff" stroke="#42b983" stroke-opacity="0.62" stroke-width="1"/><circle cx="834.6" cy="445.6" r="2.2" fill="#fff" stroke="#42b983" stroke-opacity="0.62" stroke-width="1"/><circle cx="872.0" cy="445.6" r="2.2" fill="#fff" stroke="#42b983" stroke-opacity="0.62" stroke-width="1"/><circle cx="909.4" cy="452.3" r="2.2" fill="#fff" stroke="#42b983" stroke-opacity="0.62" stroke-width="1"/><circle cx="946.7" cy="439.3" r="2.2" fill="#fff" stroke="#42b983" stroke-opacity="0.62" stroke-width="1"/><circle cx="984.1" cy="452.3" r="2.2" fill="#fff" stroke="#42b983" stroke-opacity="0.62" stroke-width="1"/><circle cx="1021.5" cy="450.4" r="2.2" fill="#fff" stroke="#42b983" stroke-opacity="0.62" stroke-width="1"/><circle cx="1058.8" cy="438.6" r="2.2" fill="#fff" stroke="#42b983" stroke-opacity="0.62" stroke-width="1"/><circle cx="1096.2" cy="433.4" r="2.2" fill="#fff" stroke="#42b983" stroke-opacity="0.62" stroke-width="1"/><circle cx="1133.6" cy="454.4" r="2.2" fill="#fff" stroke="#42b983" stroke-opacity="0.62" stroke-width="1"/><circle cx="1171.0" cy="458.6" r="2.2" fill="#fff" stroke="#42b983" stroke-opacity="0.62" stroke-width="1"/><circle cx="1208.3" cy="453.6" r="2.2" fill="#fff" stroke="#42b983" stroke-opacity="0.62" stroke-width="1"/><circle cx="1245.7" cy="453.4" r="2.2" fill="#fff" stroke="#42b983" stroke-opacity="0.62" stroke-width="1"/><circle cx="1283.1" cy="455.7" r="2.2" fill="#fff" stroke="#42b983" stroke-opacity="0.62" stroke-width="1"/><circle cx="1320.4" cy="440.1" r="2.2" fill="#fff" stroke="#42b983" stroke-opacity="0.62" stroke-width="1"/><circle cx="1357.8" cy="450.6" r="2.2" fill="#fff" stroke="#42b983" stroke-opacity="0.62" stroke-width="1"/><circle cx="1395.2" cy="459.9" r="2.2" fill="#fff" stroke="#42b983" stroke-opacity="0.62" stroke-width="1"/><circle cx="1432.5" cy="457.2" r="2.2" fill="#fff" stroke="#42b983" stroke-opacity="0.62" stroke-width="1"/><circle cx="1469.9" cy="443.5" r="2.2" fill="#fff" stroke="#42b983" stroke-opacity="0.62" stroke-width="1"/><path d="M386.2,401.6C386.2,401.6 405.0,397.2 423.6,397.8C442.3,398.4 442.2,401.5 460.9,404.1C479.5,406.7 480.3,411.0 498.3,408.3C517.7,405.4 516.3,396.2 535.7,392.9C553.6,390.0 554.4,396.5 573.0,395.9C591.8,395.3 591.8,389.9 610.4,390.6C629.2,391.4 628.9,397.5 647.8,398.8C666.3,400.1 666.5,398.0 685.1,395.9C703.9,393.7 704.0,389.5 722.5,390.2C741.3,390.9 741.0,397.2 759.9,398.8C778.3,400.4 778.6,397.2 797.3,396.7C815.9,396.2 816.0,396.0 834.6,396.9C853.4,397.9 853.5,401.8 872.0,400.5C890.9,399.2 890.4,393.8 909.4,391.7C927.8,389.6 928.6,388.7 946.7,392.1C966.0,395.7 965.0,404.1 984.1,405.8C1002.4,407.4 1010.9,387.1 1021.5,398.6C1048.3,427.9 1040.7,487.5 1058.8,487.5C1078.1,485.8 1069.0,430.1 1096.2,392.1C1106.4,383.0 1114.8,383.7 1133.6,383.0C1152.1,383.0 1152.2,387.1 1171.0,389.6C1189.5,392.0 1189.6,391.6 1208.3,392.7C1227.0,393.9 1227.0,394.0 1245.7,394.2C1264.4,394.4 1264.7,391.4 1283.1,393.6C1302.0,395.8 1301.5,400.1 1320.4,403.0C1338.8,406.0 1339.1,405.0 1357.8,405.4C1376.5,405.7 1384.3,392.6 1395.2,404.5C1421.7,433.6 1406.1,458.1 1432.5,487.5C1443.4,487.5 1469.9,487.5 1469.9,487.5" fill="none" stroke="#fcb92c" stroke-opacity="0.62" stroke-width="2" stroke-linejoin="round"/><circle cx="386.2" cy="401.6" r="2.2" fill="#fff" stroke="#fcb92c" stroke-opacity="0.62" stroke-width="1"/><circle cx="423.6" cy="397.8" r="2.2" fill="#fff" stroke="#fcb92c" stroke-opacity="0.62" stroke-width="1"/><circle cx="460.9" cy="404.1" r="2.2" fill="#fff" stroke="#fcb92c" stroke-opacity="0.62" stroke-width="1"/><circle cx="498.3" cy="408.3" r="2.2" fill="#fff" stroke="#fcb92c" stroke-opacity="0.62" stroke-width="1"/><circle cx="535.7" cy="392.9" r="2.2" fill="#fff" stroke="#fcb92c" stroke-opacity="0.62" stroke-width="1"/><circle cx="573.0" cy="395.9" r="2.2" fill="#fff" stroke="#fcb92c" stroke-opacity="0.62" stroke-width="1"/><circle cx="610.4" cy="390.6" r="2.2" fill="#fff" stroke="#fcb92c" stroke-opacity="0.62" stroke-width="1"/><circle cx="647.8" cy="398.8" r="2.2" fill="#fff" stroke="#fcb92c" stroke-opacity="0.62" stroke-width="1"/><circle cx="685.1" cy="395.9" r="2.2" fill="#fff" stroke="#fcb92c" stroke-opacity="0.62" stroke-width="1"/><circle cx="722.5" cy="390.2" r="2.2" fill="#fff" stroke="#fcb92c" stroke-opacity="0.62" stroke-width="1"/><circle cx="759.9" cy="398.8" r="2.2" fill="#fff" stroke="#fcb92c" stroke-opacity="0.62" stroke-width="1"/><circle cx="834.6" cy="396.9" r="2.2" fill="#fff" stroke="#fcb92c" stroke-opacity="0.62" stroke-width="1"/><circle cx="872.0" cy="400.5" r="2.2" fill="#fff" stroke="#fcb92c" stroke-opacity="0.62" stroke-width="1"/><circle cx="909.4" cy="391.7" r="2.2" fill="#fff" stroke="#fcb92c" stroke-opacity="0.62" stroke-width="1"/><circle cx="946.7" cy="392.1" r="2.2" fill="#fff" stroke="#fcb92c" stroke-opacity="0.62" stroke-width="1"/><circle cx="984.1" cy="405.8" r="2.2" fill="#fff" stroke="#fcb92c" stroke-opacity="0.62" stroke-width="1"/><circle cx="1021.5" cy="398.6" r="2.2" fill="#fff" stroke="#fcb92c" stroke-opacity="0.62" stroke-width="1"/><circle cx="1058.8" cy="487.5" r="2.2" fill="#fff" stroke="#fcb92c" stroke-opacity="0.62" stroke-width="1"/><circle cx="1096.2" cy="392.1" r="2.2" fill="#fff" stroke="#fcb92c" stroke-opacity="0.62" stroke-width="1"/><circle cx="1133.6" cy="383.0" r="2.2" fill="#fff" stroke="#fcb92c" stroke-opacity="0.62" stroke-width="1"/><circle cx="1171.0" cy="389.6" r="2.2" fill="#fff" stroke="#fcb92c" stroke-opacity="0.62" stroke-width="1"/><circle cx="1208.3" cy="392.7" r="2.2" fill="#fff" stroke="#fcb92c" stroke-opacity="0.62" stroke-width="1"/><circle cx="1245.7" cy="394.2" r="2.2" fill="#fff" stroke="#fcb92c" stroke-opacity="0.62" stroke-width="1"/><circle cx="1283.1" cy="393.6" r="2.2" fill="#fff" stroke="#fcb92c" stroke-opacity="0.62" stroke-width="1"/><circle cx="1320.4" cy="403.0" r="2.2" fill="#fff" stroke="#fcb92c" stroke-opacity="0.62" stroke-width="1"/><circle cx="1357.8" cy="405.4" r="2.2" fill="#fff" stroke="#fcb92c" stroke-opacity="0.62" stroke-width="1"/><circle cx="1395.2" cy="404.5" r="2.2" fill="#fff" stroke="#fcb92c" stroke-opacity="0.62" stroke-width="1"/><circle cx="1432.5" cy="487.5" r="2.2" fill="#fff" stroke="#fcb92c" stroke-opacity="0.62" stroke-width="1"/><circle cx="1469.9" cy="487.5" r="2.2" fill="#fff" stroke="#fcb92c" stroke-opacity="0.62" stroke-width="1"/><circle cx="797.3" cy="395.3" r="5" fill="#fff" stroke="#409eff" stroke-opacity="0.7" stroke-width="1.1"/><circle cx="797.3" cy="398.0" r="5" fill="#fff" stroke="#f8457f" stroke-opacity="0.7" stroke-width="1.1"/><circle cx="797.3" cy="434.4" r="5" fill="#fff" stroke="#42b983" stroke-opacity="0.7" stroke-width="1.1"/><circle cx="797.3" cy="396.7" r="5" fill="#fff" stroke="#fcb92c" stroke-opacity="0.7" stroke-width="1.1"/>
<line x1="367.5" x2="1488.5" y1="708.5" y2="708.5" stroke="#e0e6f1" stroke-width="1" stroke-dasharray="2,3"/><line x1="367.5" x2="1488.5" y1="690.5" y2="690.5" stroke="#e0e6f1" stroke-width="1" stroke-dasharray="2,3"/><line x1="367.5" x2="1488.5" y1="673.5" y2="673.5" stroke="#e0e6f1" stroke-width="1" stroke-dasharray="2,3"/><line x1="367.5" x2="1488.5" y1="655.5" y2="655.5" stroke="#e0e6f1" stroke-width="1" stroke-dasharray="2,3"/><line x1="367.5" x2="1488.5" y1="638.5" y2="638.5" stroke="#e0e6f1" stroke-width="1" stroke-dasharray="2,3"/><line x1="367.5" x2="1488.5" y1="620.5" y2="620.5" stroke="#e0e6f1" stroke-width="1" stroke-dasharray="2,3"/><line x1="367.5" x2="1488.5" y1="725.5" y2="725.5" stroke="#dfe4ee" stroke-width="1"/><line x1="367.5" x2="367.5" y1="725.5" y2="730.5" stroke="#dfe4ee" stroke-width="1"/><line x1="442.2" x2="442.2" y1="725.5" y2="730.5" stroke="#dfe4ee" stroke-width="1"/><line x1="517.0" x2="517.0" y1="725.5" y2="730.5" stroke="#dfe4ee" stroke-width="1"/><line x1="591.7" x2="591.7" y1="725.5" y2="730.5" stroke="#dfe4ee" stroke-width="1"/><line x1="666.5" x2="666.5" y1="725.5" y2="730.5" stroke="#dfe4ee" stroke-width="1"/><line x1="741.2" x2="741.2" y1="725.5" y2="730.5" stroke="#dfe4ee" stroke-width="1"/><line x1="815.9" x2="815.9" y1="725.5" y2="730.5" stroke="#dfe4ee" stroke-width="1"/><line x1="890.7" x2="890.7" y1="725.5" y2="730.5" stroke="#dfe4ee" stroke-width="1"/><line x1="965.4" x2="965.4" y1="725.5" y2="730.5" stroke="#dfe4ee" stroke-width="1"/><line x1="1040.2" x2="1040.2" y1="725.5" y2="730.5" stroke="#dfe4ee" stroke-width="1"/><line x1="1114.9" x2="1114.9" y1="725.5" y2="730.5" stroke="#dfe4ee" stroke-width="1"/><line x1="1189.6" x2="1189.6" y1="725.5" y2="730.5" stroke="#dfe4ee" stroke-width="1"/><line x1="1264.4" x2="1264.4" y1="725.5" y2="730.5" stroke="#dfe4ee" stroke-width="1"/><line x1="1339.1" x2="1339.1" y1="725.5" y2="730.5" stroke="#dfe4ee" stroke-width="1"/><line x1="1413.9" x2="1413.9" y1="725.5" y2="730.5" stroke="#dfe4ee" stroke-width="1"/><line x1="1488.6" x2="1488.6" y1="725.5" y2="730.5" stroke="#dfe4ee" stroke-width="1"/><line x1="796.5" x2="796.5" y1="620" y2="725.5" stroke="#999" stroke-width="1"/><path d="M386.2,667.8C386.2,667.8 404.5,656.5 423.6,655.1C441.9,653.8 442.1,660.8 460.9,662.4C479.4,664.0 480.5,665.7 498.3,661.5C517.8,656.8 516.3,647.0 535.7,644.6C553.7,642.4 554.2,650.8 573.0,652.3C591.5,653.8 591.8,650.0 610.4,650.6C629.1,651.3 629.6,657.1 647.8,654.8C667.0,652.3 665.9,644.2 685.1,641.1C703.3,638.3 703.8,643.2 722.5,643.0C741.2,642.8 741.2,641.0 759.9,640.5C778.5,640.0 778.6,640.2 797.3,641.0C816.0,641.8 816.1,641.1 834.6,643.7C853.5,646.3 853.1,649.4 872.0,651.3C890.5,653.1 890.7,651.9 909.4,651.0C928.1,650.0 928.0,647.6 946.7,647.5C965.4,647.4 965.4,650.7 984.1,650.6C1002.8,650.6 1002.8,648.2 1021.5,647.2C1040.1,646.2 1040.4,649.0 1058.8,646.5C1077.8,644.0 1077.4,641.1 1096.2,637.2C1114.7,633.5 1114.8,632.4 1133.6,631.3C1152.2,630.2 1152.6,634.9 1171.0,632.9C1189.9,630.9 1189.5,623.9 1208.3,623.3C1226.9,622.7 1226.8,628.4 1245.7,630.6C1264.2,632.7 1264.6,629.4 1283.1,631.9C1302.0,634.5 1301.5,638.0 1320.4,640.9C1338.9,643.8 1339.2,641.3 1357.8,643.5C1376.6,645.8 1376.4,647.2 1395.2,649.8C1413.8,652.4 1416.5,660.0 1432.5,653.8C1453.8,645.6 1469.9,621.0 1469.9,621.0" fill="none" stroke="#409eff" stroke-opacity="0.62" stroke-width="2" stroke-linejoin="round"/><circle cx="386.2" cy="667.8" r="2.2" fill="#fff" stroke="#409eff" stroke-opacity="0.62" stroke-width="1"/><circle cx="423.6" cy="655.1" r="2.2" fill="#fff" stroke="#409eff" stroke-opacity="0.62" stroke-width="1"/><circle cx="460.9" cy="662.4" r="2.2" fill="#fff" stroke="#409eff" stroke-opacity="0.62" stroke-width="1"/><circle cx="498.3" cy="661.5" r="2.2" fill="#fff" stroke="#409eff" stroke-opacity="0.62" stroke-width="1"/><circle cx="535.7" cy="644.6" r="2.2" fill="#fff" stroke="#409eff" stroke-opacity="0.62" stroke-width="1"/><circle cx="573.0" cy="652.3" r="2.2" fill="#fff" stroke="#409eff" stroke-opacity="0.62" stroke-width="1"/><circle cx="610.4" cy="650.6" r="2.2" fill="#fff" stroke="#409eff" stroke-opacity="0.62" stroke-width="1"/><circle cx="647.8" cy="654.8" r="2.2" fill="#fff" stroke="#409eff" stroke-opacity="0.62" stroke-width="1"/><circle cx="685.1" cy="641.1" r="2.2" fill="#fff" stroke="#409eff" stroke-opacity="0.62" stroke-width="1"/><circle cx="722.5" cy="643.0" r="2.2" fill="#fff" stroke="#409eff" stroke-opacity="0.62" stroke-width="1"/><circle cx="759.9" cy="640.5" r="2.2" fill="#fff" stroke="#409eff" stroke-opacity="0.62" stroke-width="1"/><circle cx="834.6" cy="643.7" r="2.2" fill="#fff" stroke="#409eff" stroke-opacity="0.62" stroke-width="1"/><circle cx="872.0" cy="651.3" r="2.2" fill="#fff" stroke="#409eff" stroke-opacity="0.62" stroke-width="1"/><circle cx="909.4" cy="651.0" r="2.2" fill="#fff" stroke="#409eff" stroke-opacity="0.62" stroke-width="1"/><circle cx="946.7" cy="647.5" r="2.2" fill="#fff" stroke="#409eff" stroke-opacity="0.62" stroke-width="1"/><circle cx="984.1" cy="650.6" r="2.2" fill="#fff" stroke="#409eff" stroke-opacity="0.62" stroke-width="1"/><circle cx="1021.5" cy="647.2" r="2.2" fill="#fff" stroke="#409eff" stroke-opacity="0.62" stroke-width="1"/><circle cx="1058.8" cy="646.5" r="2.2" fill="#fff" stroke="#409eff" stroke-opacity="0.62" stroke-width="1"/><circle cx="1096.2" cy="637.2" r="2.2" fill="#fff" stroke="#409eff" stroke-opacity="0.62" stroke-width="1"/><circle cx="1133.6" cy="631.3" r="2.2" fill="#fff" stroke="#409eff" stroke-opacity="0.62" stroke-width="1"/><circle cx="1171.0" cy="632.9" r="2.2" fill="#fff" stroke="#409eff" stroke-opacity="0.62" stroke-width="1"/><circle cx="1208.3" cy="623.3" r="2.2" fill="#fff" stroke="#409eff" stroke-opacity="0.62" stroke-width="1"/><circle cx="1245.7" cy="630.6" r="2.2" fill="#fff" stroke="#409eff" stroke-opacity="0.62" stroke-width="1"/><circle cx="1283.1" cy="631.9" r="2.2" fill="#fff" stroke="#409eff" stroke-opacity="0.62" stroke-width="1"/><circle cx="1320.4" cy="640.9" r="2.2" fill="#fff" stroke="#409eff" stroke-opacity="0.62" stroke-width="1"/><circle cx="1357.8" cy="643.5" r="2.2" fill="#fff" stroke="#409eff" stroke-opacity="0.62" stroke-width="1"/><circle cx="1395.2" cy="649.8" r="2.2" fill="#fff" stroke="#409eff" stroke-opacity="0.62" stroke-width="1"/><circle cx="1432.5" cy="653.8" r="2.2" fill="#fff" stroke="#409eff" stroke-opacity="0.62" stroke-width="1"/><circle cx="1469.9" cy="621.0" r="2.2" fill="#fff" stroke="#409eff" stroke-opacity="0.62" stroke-width="1"/><path d="M386.2,723.7C386.2,723.7 404.9,723.9 423.6,723.8C442.2,723.8 442.2,723.7 460.9,723.6C479.6,723.5 479.6,723.6 498.3,723.5C517.0,723.5 517.0,723.3 535.7,723.5C554.4,723.6 554.3,724.1 573.0,724.2C591.7,724.2 591.7,723.9 610.4,723.8C629.1,723.8 629.1,724.0 647.8,724.0C666.5,723.9 666.5,723.7 685.1,723.6C703.8,723.5 703.8,723.8 722.5,723.7C741.2,723.7 741.2,723.5 759.9,723.4C778.6,723.3 778.6,723.3 797.3,723.3C815.9,723.4 815.9,723.4 834.6,723.5C853.3,723.7 853.3,723.8 872.0,723.8C890.7,723.9 890.7,723.8 909.4,723.7C928.1,723.6 928.1,723.5 946.7,723.5C965.4,723.6 965.4,723.8 984.1,724.0C1002.8,724.1 1002.8,724.1 1021.5,724.1C1040.2,724.0 1040.2,723.9 1058.8,723.7C1077.5,723.5 1077.5,723.3 1096.2,723.4C1114.9,723.4 1114.9,723.7 1133.6,723.8C1152.3,724.0 1152.3,724.0 1171.0,724.0C1189.6,724.0 1189.6,723.9 1208.3,723.8C1227.0,723.8 1227.0,723.8 1245.7,723.8C1264.4,723.9 1264.4,724.1 1283.1,724.0C1301.8,723.8 1301.7,723.5 1320.4,723.4C1339.1,723.4 1339.1,723.7 1357.8,723.8C1376.5,724.0 1376.5,723.9 1395.2,724.0C1413.9,724.0 1413.9,724.0 1432.5,724.0C1451.2,723.9 1469.9,723.7 1469.9,723.7" fill="none" stroke="#f8457f" stroke-opacity="0.62" stroke-width="2" stroke-linejoin="round"/><circle cx="386.2" cy="723.7" r="2.2" fill="#fff" stroke="#f8457f" stroke-opacity="0.62" stroke-width="1"/><circle cx="423.6" cy="723.8" r="2.2" fill="#fff" stroke="#f8457f" stroke-opacity="0.62" stroke-width="1"/><circle cx="460.9" cy="723.6" r="2.2" fill="#fff" stroke="#f8457f" stroke-opacity="0.62" stroke-width="1"/><circle cx="498.3" cy="723.5" r="2.2" fill="#fff" stroke="#f8457f" stroke-opacity="0.62" stroke-width="1"/><circle cx="535.7" cy="723.5" r="2.2" fill="#fff" stroke="#f8457f" stroke-opacity="0.62" stroke-width="1"/><circle cx="573.0" cy="724.2" r="2.2" fill="#fff" stroke="#f8457f" stroke-opacity="0.62" stroke-width="1"/><circle cx="610.4" cy="723.8" r="2.2" fill="#fff" stroke="#f8457f" stroke-opacity="0.62" stroke-width="1"/><circle cx="647.8" cy="724.0" r="2.2" fill="#fff" stroke="#f8457f" stroke-opacity="0.62" stroke-width="1"/><circle cx="685.1" cy="723.6" r="2.2" fill="#fff" stroke="#f8457f" stroke-opacity="0.62" stroke-width="1"/><circle cx="722.5" cy="723.7" r="2.2" fill="#fff" stroke="#f8457f" stroke-opacity="0.62" stroke-width="1"/><circle cx="759.9" cy="723.4" r="2.2" fill="#fff" stroke="#f8457f" stroke-opacity="0.62" stroke-width="1"/><circle cx="834.6" cy="723.5" r="2.2" fill="#fff" stroke="#f8457f" stroke-opacity="0.62" stroke-width="1"/><circle cx="872.0" cy="723.8" r="2.2" fill="#fff" stroke="#f8457f" stroke-opacity="0.62" stroke-width="1"/><circle cx="909.4" cy="723.7" r="2.2" fill="#fff" stroke="#f8457f" stroke-opacity="0.62" stroke-width="1"/><circle cx="946.7" cy="723.5" r="2.2" fill="#fff" stroke="#f8457f" stroke-opacity="0.62" stroke-width="1"/><circle cx="984.1" cy="724.0" r="2.2" fill="#fff" stroke="#f8457f" stroke-opacity="0.62" stroke-width="1"/><circle cx="1021.5" cy="724.1" r="2.2" fill="#fff" stroke="#f8457f" stroke-opacity="0.62" stroke-width="1"/><circle cx="1058.8" cy="723.7" r="2.2" fill="#fff" stroke="#f8457f" stroke-opacity="0.62" stroke-width="1"/><circle cx="1096.2" cy="723.4" r="2.2" fill="#fff" stroke="#f8457f" stroke-opacity="0.62" stroke-width="1"/><circle cx="1133.6" cy="723.8" r="2.2" fill="#fff" stroke="#f8457f" stroke-opacity="0.62" stroke-width="1"/><circle cx="1171.0" cy="724.0" r="2.2" fill="#fff" stroke="#f8457f" stroke-opacity="0.62" stroke-width="1"/><circle cx="1208.3" cy="723.8" r="2.2" fill="#fff" stroke="#f8457f" stroke-opacity="0.62" stroke-width="1"/><circle cx="1245.7" cy="723.8" r="2.2" fill="#fff" stroke="#f8457f" stroke-opacity="0.62" stroke-width="1"/><circle cx="1283.1" cy="724.0" r="2.2" fill="#fff" stroke="#f8457f" stroke-opacity="0.62" stroke-width="1"/><circle cx="1320.4" cy="723.4" r="2.2" fill="#fff" stroke="#f8457f" stroke-opacity="0.62" stroke-width="1"/><circle cx="1357.8" cy="723.8" r="2.2" fill="#fff" stroke="#f8457f" stroke-opacity="0.62" stroke-width="1"/><circle cx="1395.2" cy="724.0" r="2.2" fill="#fff" stroke="#f8457f" stroke-opacity="0.62" stroke-width="1"/><circle cx="1432.5" cy="724.0" r="2.2" fill="#fff" stroke="#f8457f" stroke-opacity="0.62" stroke-width="1"/><circle cx="1469.9" cy="723.7" r="2.2" fill="#fff" stroke="#f8457f" stroke-opacity="0.62" stroke-width="1"/><path d="M386.2,673.3C386.2,673.3 406.6,670.4 423.6,661.1C443.9,649.8 440.1,640.2 460.9,632.2C477.4,629.2 479.6,633.0 498.3,632.5C517.0,632.0 517.0,630.6 535.7,630.2C554.3,629.9 554.3,631.0 573.0,631.3C591.7,631.6 591.7,631.3 610.4,631.3C629.1,631.3 629.1,631.6 647.8,631.3C666.5,630.9 666.5,630.4 685.1,629.9C703.8,629.4 703.8,629.4 722.5,629.2C741.2,629.2 741.2,629.2 759.9,629.2C778.6,629.2 778.6,629.2 797.3,629.2C815.9,629.2 815.9,629.2 834.6,629.2C853.3,629.2 853.3,629.2 872.0,629.2C890.7,629.2 890.7,629.2 909.4,629.2C928.0,629.2 928.0,629.2 946.7,629.2C965.4,629.2 969.4,629.2 984.1,629.2C1006.8,642.5 998.9,658.2 1021.5,673.0C1036.3,682.7 1040.1,676.9 1058.8,678.2C1077.4,679.5 1080.0,671.4 1096.2,678.2C1117.4,687.0 1112.5,701.5 1133.6,709.4C1149.9,709.4 1152.5,709.0 1171.0,705.9C1189.9,702.6 1189.4,698.8 1208.3,696.4C1226.7,694.1 1227.0,696.4 1245.7,696.4C1264.4,696.4 1264.4,696.4 1283.1,696.4C1301.8,696.4 1301.9,697.9 1320.4,696.4C1339.2,694.9 1339.0,691.9 1357.8,690.5C1376.4,689.0 1377.1,687.0 1395.2,690.5C1414.5,694.2 1413.2,701.1 1432.5,704.8C1450.6,708.3 1469.9,704.8 1469.9,704.8" fill="none" stroke="#42b983" stroke-opacity="0.62" stroke-width="2" stroke-linejoin="round"/><circle cx="386.2" cy="673.3" r="2.2" fill="#fff" stroke="#42b983" stroke-opacity="0.62" stroke-width="1"/><circle cx="423.6" cy="661.1" r="2.2" fill="#fff" stroke="#42b983" stroke-opacity="0.62" stroke-width="1"/><circle cx="460.9" cy="632.2" r="2.2" fill="#fff" stroke="#42b983" stroke-opacity="0.62" stroke-width="1"/><circle cx="498.3" cy="632.5" r="2.2" fill="#fff" stroke="#42b983" stroke-opacity="0.62" stroke-width="1"/><circle cx="535.7" cy="630.2" r="2.2" fill="#fff" stroke="#42b983" stroke-opacity="0.62" stroke-width="1"/><circle cx="573.0" cy="631.3" r="2.2" fill="#fff" stroke="#42b983" stroke-opacity="0.62" stroke-width="1"/><circle cx="610.4" cy="631.3" r="2.2" fill="#fff" stroke="#42b983" stroke-opacity="0.62" stroke-width="1"/><circle cx="647.8" cy="631.3" r="2.2" fill="#fff" stroke="#42b983" stroke-opacity="0.62" stroke-width="1"/><circle cx="685.1" cy="629.9" r="2.2" fill="#fff" stroke="#42b983" stroke-opacity="0.62" stroke-width="1"/><circle cx="722.5" cy="629.2" r="2.2" fill="#fff" stroke="#42b983" stroke-opacity="0.62" stroke-width="1"/><circle cx="759.9" cy="629.2" r="2.2" fill="#fff" stroke="#42b983" stroke-opacity="0.62" stroke-width="1"/><circle cx="834.6" cy="629.2" r="2.2" fill="#fff" stroke="#42b983" stroke-opacity="0.62" stroke-width="1"/><circle cx="872.0" cy="629.2" r="2.2" fill="#fff" stroke="#42b983" stroke-opacity="0.62" stroke-width="1"/><circle cx="909.4" cy="629.2" r="2.2" fill="#fff" stroke="#42b983" stroke-opacity="0.62" stroke-width="1"/><circle cx="946.7" cy="629.2" r="2.2" fill="#fff" stroke="#42b983" stroke-opacity="0.62" stroke-width="1"/><circle cx="984.1" cy="629.2" r="2.2" fill="#fff" stroke="#42b983" stroke-opacity="0.62" stroke-width="1"/><circle cx="1021.5" cy="673.0" r="2.2" fill="#fff" stroke="#42b983" stroke-opacity="0.62" stroke-width="1"/><circle cx="1058.8" cy="678.2" r="2.2" fill="#fff" stroke="#42b983" stroke-opacity="0.62" stroke-width="1"/><circle cx="1096.2" cy="678.2" r="2.2" fill="#fff" stroke="#42b983" stroke-opacity="0.62" stroke-width="1"/><circle cx="1133.6" cy="709.4" r="2.2" fill="#fff" stroke="#42b983" stroke-opacity="0.62" stroke-width="1"/><circle cx="1171.0" cy="705.9" r="2.2" fill="#fff" stroke="#42b983" stroke-opacity="0.62" stroke-width="1"/><circle cx="1208.3" cy="696.4" r="2.2" fill="#fff" stroke="#42b983" stroke-opacity="0.62" stroke-width="1"/><circle cx="1245.7" cy="696.4" r="2.2" fill="#fff" stroke="#42b983" stroke-opacity="0.62" stroke-width="1"/><circle cx="1283.1" cy="696.4" r="2.2" fill="#fff" stroke="#42b983" stroke-opacity="0.62" stroke-width="1"/><circle cx="1320.4" cy="696.4" r="2.2" fill="#fff" stroke="#42b983" stroke-opacity="0.62" stroke-width="1"/><circle cx="1357.8" cy="690.5" r="2.2" fill="#fff" stroke="#42b983" stroke-opacity="0.62" stroke-width="1"/><circle cx="1395.2" cy="690.5" r="2.2" fill="#fff" stroke="#42b983" stroke-opacity="0.62" stroke-width="1"/><circle cx="1432.5" cy="704.8" r="2.2" fill="#fff" stroke="#42b983" stroke-opacity="0.62" stroke-width="1"/><circle cx="1469.9" cy="704.8" r="2.2" fill="#fff" stroke="#42b983" stroke-opacity="0.62" stroke-width="1"/><circle cx="797.3" cy="641.0" r="5" fill="#fff" stroke="#409eff" stroke-opacity="0.7" stroke-width="1.1"/><circle cx="797.3" cy="723.3" r="5" fill="#fff" stroke="#f8457f" stroke-opacity="0.7" stroke-width="1.1"/><circle cx="797.3" cy="629.2" r="5" fill="#fff" stroke="#42b983" stroke-opacity="0.7" stroke-width="1.1"/>
</svg>

<!-- tooltips -->
<div class="tip" style="left:818px;top:301px;width:186px;height:115px">04/03<br><span class="d" style="background:#4b8bcf"></span>UCR<i class="c">：</i>43.77%<br><span class="d" style="background:#c9517d"></span>OCR<i class="c">：</i>42.5%<br><span class="d" style="background:#4ba283"></span><i class="c">广</i><i class="c">告</i><i class="c">转</i><i class="c">化</i><i class="c">率</i><i class="c">：</i>25.22%<br><span class="d" style="background:#d9a338"></span><i class="c">自</i><i class="c">然</i><i class="c">流</i><i class="c">量</i><i class="c">转</i><i class="c">化</i><i class="c">率</i><i class="c">：</i>43.11%</div>
<div class="tip" style="left:817px;top:661px;width:110px;height:94px">04/03<br><span class="d" style="background:#4b8bcf"></span><i class="c">订</i><i class="c">单</i><i class="c">量</i>: 1,442<br><span class="d" style="background:#c9517d"></span><i class="c">广</i><i class="c">告</i><i class="c">订</i><i class="c">单</i>: 29<br><span class="d" style="background:#4ba283"></span>BSR: 26</div>

<!-- floating buttons -->
<div class="a" style="left:1577px;top:627px;width:40px;height:40px;border-radius:6px 0 0 6px;background:#409eff"></div>
<svg class="a" style="left:1583px;top:634px" width="28" height="28" viewBox="0 0 28 28"><path d="M4.2,20.500 l-1.700,5.300 l6,-1.800 z" fill="#fff"/><circle cx="14.100" cy="13.300" r="13.100" fill="#fff"/><path d="M7.500,12.300 C7.500,7 10,4.300 14.300,4.300 C18.600,4.300 21.100,7 21.100,12.300" fill="none" stroke="#409eff" stroke-width="0.900"/><circle cx="7.500" cy="14.500" r="2.100" fill="#fff" stroke="#409eff" stroke-width="0.900"/><circle cx="21.100" cy="14.500" r="2.100" fill="#fff" stroke="#409eff" stroke-width="0.900"/><path d="M21,16.700 C20.600,18.800 18.400,19.800 15.800,19.900" fill="none" stroke="#409eff" stroke-width="0.900"/><circle cx="15.200" cy="19.900" r="1.100" fill="#409eff"/></svg>
<div class="a" style="left:1577px;top:670px;width:40px;height:69.500px;border-radius:6px 0 0 6px;background:#409eff"></div>
<svg class="a" style="left:1583px;top:677px" width="28" height="28" viewBox="0 0 28 28"><circle cx="14.200" cy="13.400" r="13.300" fill="#fff"/><rect x="6.900" y="7.700" width="14.600" height="13.500" rx="2.800" fill="none" stroke="#409eff" stroke-width="0.900"/><rect x="10.500" y="5.500" width="6.600" height="3" rx="1.400" fill="#fff" stroke="#409eff" stroke-width="0.900"/><path d="M10.400,13.100 L13.200,15.800 L17.800,11.200" fill="none" stroke="#409eff" stroke-width="0.900"/></svg>
<div class="a" style="left:1578.2px;top:704.9px;font-size:12px;line-height:16px;color:#fff"><i class="c">填</i><i class="c">问</i><i class="c">卷</i><br><i class="c">赠</i><i class="c">现</i><i class="c">金</i></div>
</body>
</html>
